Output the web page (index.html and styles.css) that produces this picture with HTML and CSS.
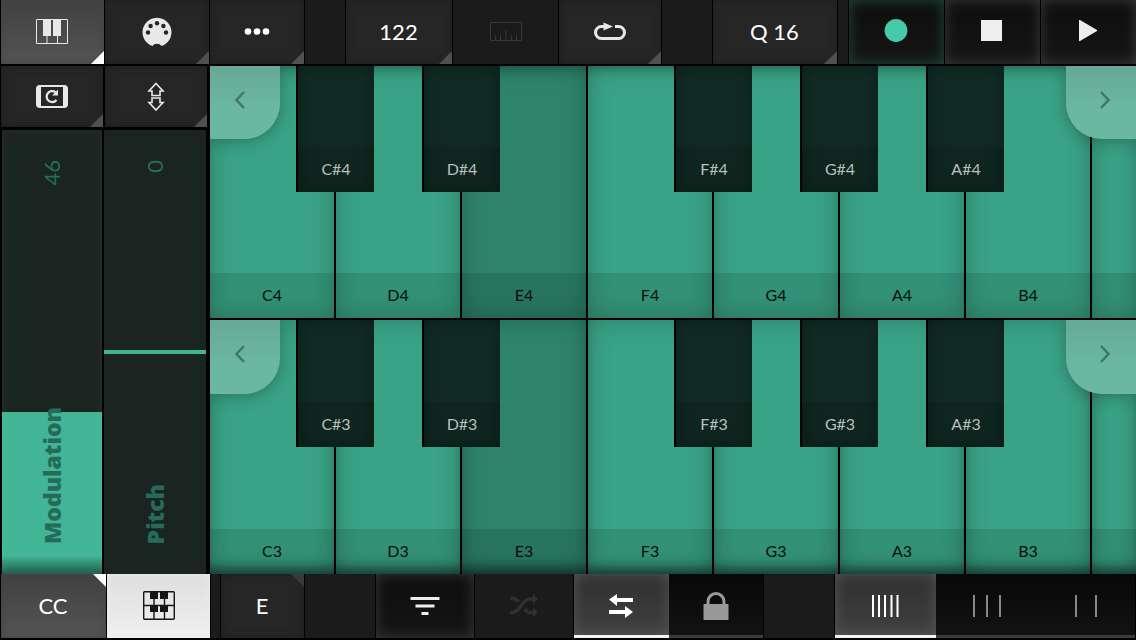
FILE: index.html
```html
<!DOCTYPE html>
<html lang="en">
<head>
<meta charset="utf-8">
<meta name="viewport" content="width=device-width, initial-scale=1">
<title>Keyboard</title>
<link rel="stylesheet" href="styles.css">
</head>
<body>
<div class="app">
  <header class="bar bar-top">
    <button class="btn btn-active corner" aria-label="Keyboard">
      <svg width="32" height="26" viewBox="0 0 32 26" fill="none" stroke="#e8e8e8"><path d="M.5.5h31v24H.5z"/><path d="M11 17v8M21.500 17v8"/><path d="M7 1h8v16H7zM17 1h8v16h-8z" fill="#e8e8e8" stroke="none"/></svg>
    </button>
    <button class="btn corner" aria-label="MIDI">
      <svg width="30" height="30" viewBox="0 0 30 30"><path fill="#e8e8e8" d="M10.500 29a14.500 14.500 0 1 1 9 0a5 4 0 0 0-9 0z"/><g fill="#262626"><circle cx="6" cy="15.500" r="2.200"/><circle cx="8.600" cy="9" r="2.200"/><circle cx="15" cy="6.300" r="2.200"/><circle cx="21.400" cy="9" r="2.200"/><circle cx="24" cy="15.500" r="2.200"/></g></svg>
    </button>
    <button class="btn corner" aria-label="More">
      <svg width="26" height="8" viewBox="0 0 26 8" fill="#fff"><circle cx="4" cy="3.500" r="3.300"/><circle cx="13" cy="3.500" r="3.300"/><circle cx="22" cy="3.500" r="3.300"/></svg>
    </button>
    <span class="blank"></span>
    <button class="btn btn-text corner">122</button>
    <button class="btn btn-off" aria-label="Metronome" disabled>
      <svg width="32" height="20" viewBox="0 0 32 20" fill="none" stroke="#383838"><path d="M.5.5h31v18H.5z"/><path d="M5.500 13v5M10.500 13v5M16 8v10M21.500 13v5M26.500 13v5"/></svg>
    </button>
    <button class="btn corner" aria-label="Loop">
      <svg width="32" height="20" viewBox="0 0 32 20"><path d="M10 4.500H7.500a6 6 0 0 0 0 12h17a6 6 0 0 0 0-12H21" fill="none" stroke="#e8e8e8" stroke-width="3"/><path d="M9.500.5l9.500 4-9.500 4z" fill="#e8e8e8"/></svg>
    </button>
    <span class="blank"></span>
    <button class="btn btn-text corner">Q 16</button>
    <span class="blank"></span>
    <button class="btn btn-well btn-record" aria-label="Record">
      <svg width="24" height="26" viewBox="0 0 24 26"><circle cx="12" cy="11.500" r="11.400" fill="#48caa8"/></svg>
    </button>
    <button class="btn btn-well" aria-label="Stop">
      <svg width="22" height="24" viewBox="0 0 22 24"><path d="M0 0h21v21H0z" fill="#eee"/></svg>
    </button>
    <button class="btn btn-well" aria-label="Play">
      <svg width="18" height="24" viewBox="0 0 18 24"><path d="M0 0h1l17 10v1L1 21H0z" fill="#eee"/></svg>
    </button>
  </header>

  <main class="main">
    <section class="side">
      <div class="side-buttons">
        <button class="btn corner" aria-label="Octave reset">
          <svg width="32" height="24" viewBox="0 0 32 24"><rect x="1" y="1" width="30" height="21" rx="4" fill="none" stroke="#e8e8e8" stroke-width="2"/><path d="M5 0H4a4 4 0 0 0-4 4v15a4 4 0 0 0 4 4h1zM27 0h1a4 4 0 0 1 4 4v15a4 4 0 0 1-4 4h-1z" fill="#e8e8e8"/><path d="M20.500 15a5.500 5.500 0 1 1-1-7.800" fill="none" stroke="#e8e8e8" stroke-width="2.200"/><path d="M22 4.500v6h-6z" fill="#e8e8e8"/></svg>
        </button>
        <button class="btn corner" aria-label="Scroll up and down">
          <svg width="18" height="30" viewBox="0 0 18 30" fill="none" stroke="#e8e8e8" stroke-width="1.600"><path d="M9 1.500l7 7.500h-3v4.500H5V9H2zM9 28l7-7.500h-3V16H5v4.500H2z"/></svg>
        </button>
      </div>
      <div class="sliders">
        <div class="slider">
          <input class="range range-fill" id="mod" type="range" min="0" max="127" value="46">
          <div class="slider-text"><output for="mod">46</output><label for="mod">Modulation</label></div>
        </div>
        <div class="slider">
          <input class="range range-center" id="pitch" type="range" min="-64" max="64" value="0">
          <div class="slider-text"><output for="pitch">0</output><label for="pitch">Pitch</label></div>
        </div>
      </div>
    </section>

    <section class="piano">
      <div class="row">
        <div class="slot"><button class="key"><span class="name">C4</span></button><button class="sharp"><span class="name">C#4</span></button></div>
        <div class="slot"><button class="key"><span class="name">D4</span></button><button class="sharp"><span class="name">D#4</span></button></div>
        <div class="slot"><button class="key key-root"><span class="name">E4</span></button></div>
        <div class="slot"><button class="key"><span class="name">F4</span></button><button class="sharp"><span class="name">F#4</span></button></div>
        <div class="slot"><button class="key"><span class="name">G4</span></button><button class="sharp"><span class="name">G#4</span></button></div>
        <div class="slot"><button class="key"><span class="name">A4</span></button><button class="sharp"><span class="name">A#4</span></button></div>
        <div class="slot"><button class="key"><span class="name">B4</span></button></div>
        <div class="slot"><button class="key" aria-label="C5"><span class="name"></span></button></div>
        <button class="nav nav-prev" aria-label="Lower octave"><svg width="10" height="18" viewBox="0 0 10 18"><path d="M9 1L1.500 9 9 17"/></svg></button>
        <button class="nav nav-next" aria-label="Higher octave"><svg width="10" height="18" viewBox="0 0 10 18"><path d="M1 1l7.500 8L1 17"/></svg></button>
      </div>
      <div class="row row-last">
        <div class="slot"><button class="key"><span class="name">C3</span></button><button class="sharp"><span class="name">C#3</span></button></div>
        <div class="slot"><button class="key"><span class="name">D3</span></button><button class="sharp"><span class="name">D#3</span></button></div>
        <div class="slot"><button class="key key-root"><span class="name">E3</span></button></div>
        <div class="slot"><button class="key"><span class="name">F3</span></button><button class="sharp"><span class="name">F#3</span></button></div>
        <div class="slot"><button class="key"><span class="name">G3</span></button><button class="sharp"><span class="name">G#3</span></button></div>
        <div class="slot"><button class="key"><span class="name">A3</span></button><button class="sharp"><span class="name">A#3</span></button></div>
        <div class="slot"><button class="key"><span class="name">B3</span></button></div>
        <div class="slot"><button class="key" aria-label="C4"><span class="name"></span></button></div>
        <button class="nav nav-prev" aria-label="Lower octave"><svg width="10" height="18" viewBox="0 0 10 18"><path d="M9 1L1.500 9 9 17"/></svg></button>
        <button class="nav nav-next" aria-label="Higher octave"><svg width="10" height="18" viewBox="0 0 10 18"><path d="M1 1l7.500 8L1 17"/></svg></button>
      </div>
    </section>
  </main>

  <footer class="bar bar-bottom">
    <button class="btn btn-text btn-active corner corner-top">CC</button>
    <button class="btn btn-light" aria-label="Two rows">
      <svg width="32" height="30" viewBox="0 0 32 30"><g fill="none" stroke="#151515" stroke-width="1.400"><rect x=".7" y=".7" width="30.600" height="27.600" rx="1"/><path d="M0 14.500h32M11 8v6M21.500 8v6M11 21v7M21.500 21v7"/></g><path fill="#151515" d="M7 1h8v7H7zM17 1h8v7h-8zM7 14.500h8V21H7zM17 14.500h8V21h-8z"/></svg>
    </button>
    <span class="blank"></span>
    <button class="btn btn-text corner corner-top corner-dim">E</button>
    <span class="blank"></span>
    <button class="btn btn-well" aria-label="Filter">
      <svg width="30" height="20" viewBox="0 0 30 20" fill="#eee"><path d="M.5 1h29v3H.5zM5.500 8.500h19v3h-19zM11.500 16h7v3h-7z"/></svg>
    </button>
    <button class="btn btn-off" aria-label="Shuffle" disabled>
      <svg width="28" height="24" viewBox="0 0 28 24"><path d="M0 4.500h2.500c3 0 4.500 1.300 6 3.500M0 18.500h2.500c8 0 9-13.500 17-13.500H24M15 15c1.500 2.200 3 3.500 5 3.500h4" fill="none" stroke="#303030" stroke-width="3.500"/><path d="M23 0l5 5-5 5zM23 13.500l5 5-5 5z" fill="#303030"/></svg>
    </button>
    <div class="segments segments-pair">
      <button class="seg seg-on" aria-label="Slide" aria-pressed="true">
        <svg width="24" height="24" viewBox="0 0 24 24" fill="#fff"><path d="M0 5.500L8 0v4h16v4H8v4zM24 18l-8 6v-4H0v-4h16v-4z"/></svg>
      </button>
      <button class="seg" aria-label="Lock" aria-pressed="false">
        <svg width="26" height="28" viewBox="0 0 26 28"><path d="M5 14V9.500a8 8 0 0 1 16 0V14" fill="none" stroke="#999" stroke-width="3"/><rect x=".5" y="12" width="25" height="16" rx="1" fill="#999"/></svg>
      </button>
    </div>
    <span class="blank"></span>
    <div class="segments segments-triple">
      <button class="seg seg-on" aria-label="Narrow keys" aria-pressed="true">
        <svg width="28" height="24" viewBox="0 0 28 24" stroke="#fff" stroke-width="2"><path d="M2 1v22M8 1v22M14 1v22M20.500 1v22M26.500 1v22"/></svg>
      </button>
      <button class="seg" aria-label="Medium keys" aria-pressed="false">
        <svg width="28" height="24" viewBox="0 0 28 24" stroke="#888" stroke-width="2"><path d="M1 1v22M14 1v22M27 1v22"/></svg>
      </button>
      <button class="seg" aria-label="Wide keys" aria-pressed="false">
        <svg width="22" height="24" viewBox="0 0 22 24" stroke="#888" stroke-width="2"><path d="M1 1v22M21 1v22"/></svg>
      </button>
    </div>
  </footer>
</div>
</body>
</html>
```
FILE: styles.css
```css
* {
  box-sizing: border-box;
}

body {
  margin: 0;
  background: #000;
  font-family: Lato, "Open Sans", sans-serif;
}

button {
  margin: 0;
  padding: 0;
  border: 0;
  font: inherit;
  color: inherit;
}

svg {
  display: block;
}

.app {
  display: grid;
  grid-template-rows: 64px minmax(0, 1fr) 64px;
  min-height: 100vh;
  padding-bottom: 2px;
}

/* Toolbars */

.bar {
  display: grid;
  gap: 1px;
  padding-left: 1px;
  color: #fff;
  font-size: 22px;
}

.bar-top {
  grid-template-columns: 103fr 104fr 94fr 40fr 106fr 105fr 102fr 50fr 124fr 10fr 95fr 95fr 95fr;
}

.bar-bottom {
  grid-template-columns: 105fr 103fr 9fr 83fr 70fr 98fr 98fr 189fr 70fr 300fr;
  padding-right: 1px;
}

.blank {
  background: #1b1b1b;
}

.btn,
.seg {
  display: flex;
  align-items: center;
  justify-content: center;
  min-width: 0;
  padding-right: 1px;
}

.btn {
  position: relative;
  background: #262626;
  box-shadow: inset 0 0 8px #1e1e1e;
}

.btn-text {
  padding-bottom: 2px;
}

.btn-active {
  background: linear-gradient(#414141, #545454);
  box-shadow: inset 0 0 6px #444;
}

.btn-off {
  padding-right: 0;
  background: #1b1b1b;
  box-shadow: none;
}

.btn-light {
  padding-right: 0;
  background: linear-gradient(#dedede, #f0f0f0);
  box-shadow: inset 0 0 6px #eee;
}

.btn-well {
  background: linear-gradient(#0e0e0e, #151515);
  box-shadow: inset 0 0 14px #3a3a3a;
}

.btn-record {
  box-shadow: inset 0 0 14px #1f4a3f;
}

.corner::after {
  content: "";
  position: absolute;
  right: 0;
  bottom: 0;
  width: 13px;
  height: 13px;
  background: #505050;
  clip-path: polygon(100% 0, 100% 100%, 0 100%);
}

.corner-top::after {
  top: 0;
  bottom: auto;
  clip-path: polygon(0 0, 100% 0, 100% 100%);
}

.btn-active.corner::after {
  background: #fff;
}

.corner-dim::after {
  background: #3a3a3a;
}

.segments {
  display: grid;
}

.segments-pair {
  grid-template-columns: 95fr 94fr;
}

.segments-triple {
  grid-template-columns: 101fr 102fr 97fr;
}

.seg {
  padding-top: 2px;
  background: linear-gradient(#080808, #121212);
  border-bottom: 3px solid #3c3c3c;
}

.seg-on {
  background: linear-gradient(#303030, #404040);
  border-bottom-color: #f4f4f4;
  box-shadow: inset 0 0 14px #585858;
}

/* Controller strip */

.main {
  display: grid;
  grid-template-columns: 206fr 926fr;
  gap: 3px;
  padding: 2px 0 0 1px;
}

.side {
  display: grid;
  grid-template-rows: 61px minmax(0, 1fr);
  gap: 3px;
}

.side-buttons,
.sliders {
  display: grid;
  grid-template-columns: 1fr 1fr;
  gap: 2px;
}

.sliders {
  grid-template-columns: 100fr 102fr;
  padding: 0 1px;
}

.slider {
  display: grid;
  min-height: 0;
  color: #256c58;
  font-size: 22px;
}

.range,
.slider-text {
  grid-area: 1 / 1;
}

.range {
  width: 100%;
  height: 100%;
  min-width: 0;
  min-height: 0;
  margin: 0;
  appearance: none;
  writing-mode: vertical-lr;
  direction: rtl;
}

.range::-webkit-slider-thumb {
  appearance: none;
  width: 100%;
  height: 4px;
}

.range-fill {
  background: linear-gradient(to top, #1f5a49, transparent 18px), linear-gradient(to top, #41b594 36.500%, #1a2421 36.500%);
  box-shadow: inset 0 0 10px rgba(255, 255, 255, 0.06);
}

.range-center {
  background: linear-gradient(#1a2421 calc(50% - 2px), #41b594 calc(50% - 2px), #41b594 calc(50% + 2px), #1a2421 calc(50% + 2px));
}

.slider-text {
  z-index: 1;
  display: flex;
  flex-direction: column;
  align-items: center;
  justify-content: space-between;
  padding: 30px 0;
  pointer-events: none;
}

.slider-text output,
.slider-text label {
  writing-mode: vertical-rl;
  transform: rotate(180deg);
  line-height: 28px;
}

.slider-text label {
  font-family: "Open Sans", sans-serif;
  font-size: 23px;
  font-weight: 800;
}

/* Piano */

.piano {
  display: grid;
  grid-template-rows: 252fr 254fr;
  gap: 2px;
  font-size: 16px;
}

.row {
  position: relative;
  display: grid;
  grid-template-columns: repeat(7, 124fr) 44fr;
  gap: 2px;
  overflow: hidden;
}

.slot {
  position: relative;
  display: grid;
  min-width: 0;
}

.key,
.sharp {
  display: flex;
  align-items: flex-end;
  min-width: 0;
}

.key {
  background: #3aa385;
  box-shadow: inset 0 0 24px rgba(0, 0, 0, 0.24), inset 0 10px 12px -8px rgba(0, 0, 0, 0.3);
  color: #04100c;
}

.row-last .key {
  box-shadow: inset 0 0 24px rgba(0, 0, 0, 0.24), inset 0 -12px 12px -6px rgba(0, 0, 0, 0.5);
}

.key-root {
  background: #2e846b;
}

.sharp {
  position: absolute;
  z-index: 1;
  top: 0;
  right: -40px;
  width: 78px;
  height: 50%;
  border-left: 2px solid #000;
  background: #112b24;
  box-shadow: inset 0 0 16px rgba(0, 0, 0, 0.35);
  color: #b9bfbd;
}

.name {
  display: grid;
  place-items: center;
  flex: 1;
  height: 45px;
  padding-bottom: 2px;
  background: rgba(0, 0, 0, 0.11);
}

.nav {
  position: absolute;
  z-index: 2;
  top: 0;
  display: grid;
  place-items: center;
  width: 70px;
  height: 29%;
  background: linear-gradient(#66a995, #6bb8a2 60%);
  box-shadow: 0 2px 16px rgba(0, 0, 0, 0.3);
}

.nav-prev {
  left: 0;
  padding: 0 10px 6px 0;
  border-bottom-right-radius: 36px;
}

.nav-next {
  right: 0;
  padding: 0 0 6px 8px;
  border-bottom-left-radius: 36px;
}

.nav path {
  fill: none;
  stroke: #3f7868;
  stroke-width: 2.500;
}
```
